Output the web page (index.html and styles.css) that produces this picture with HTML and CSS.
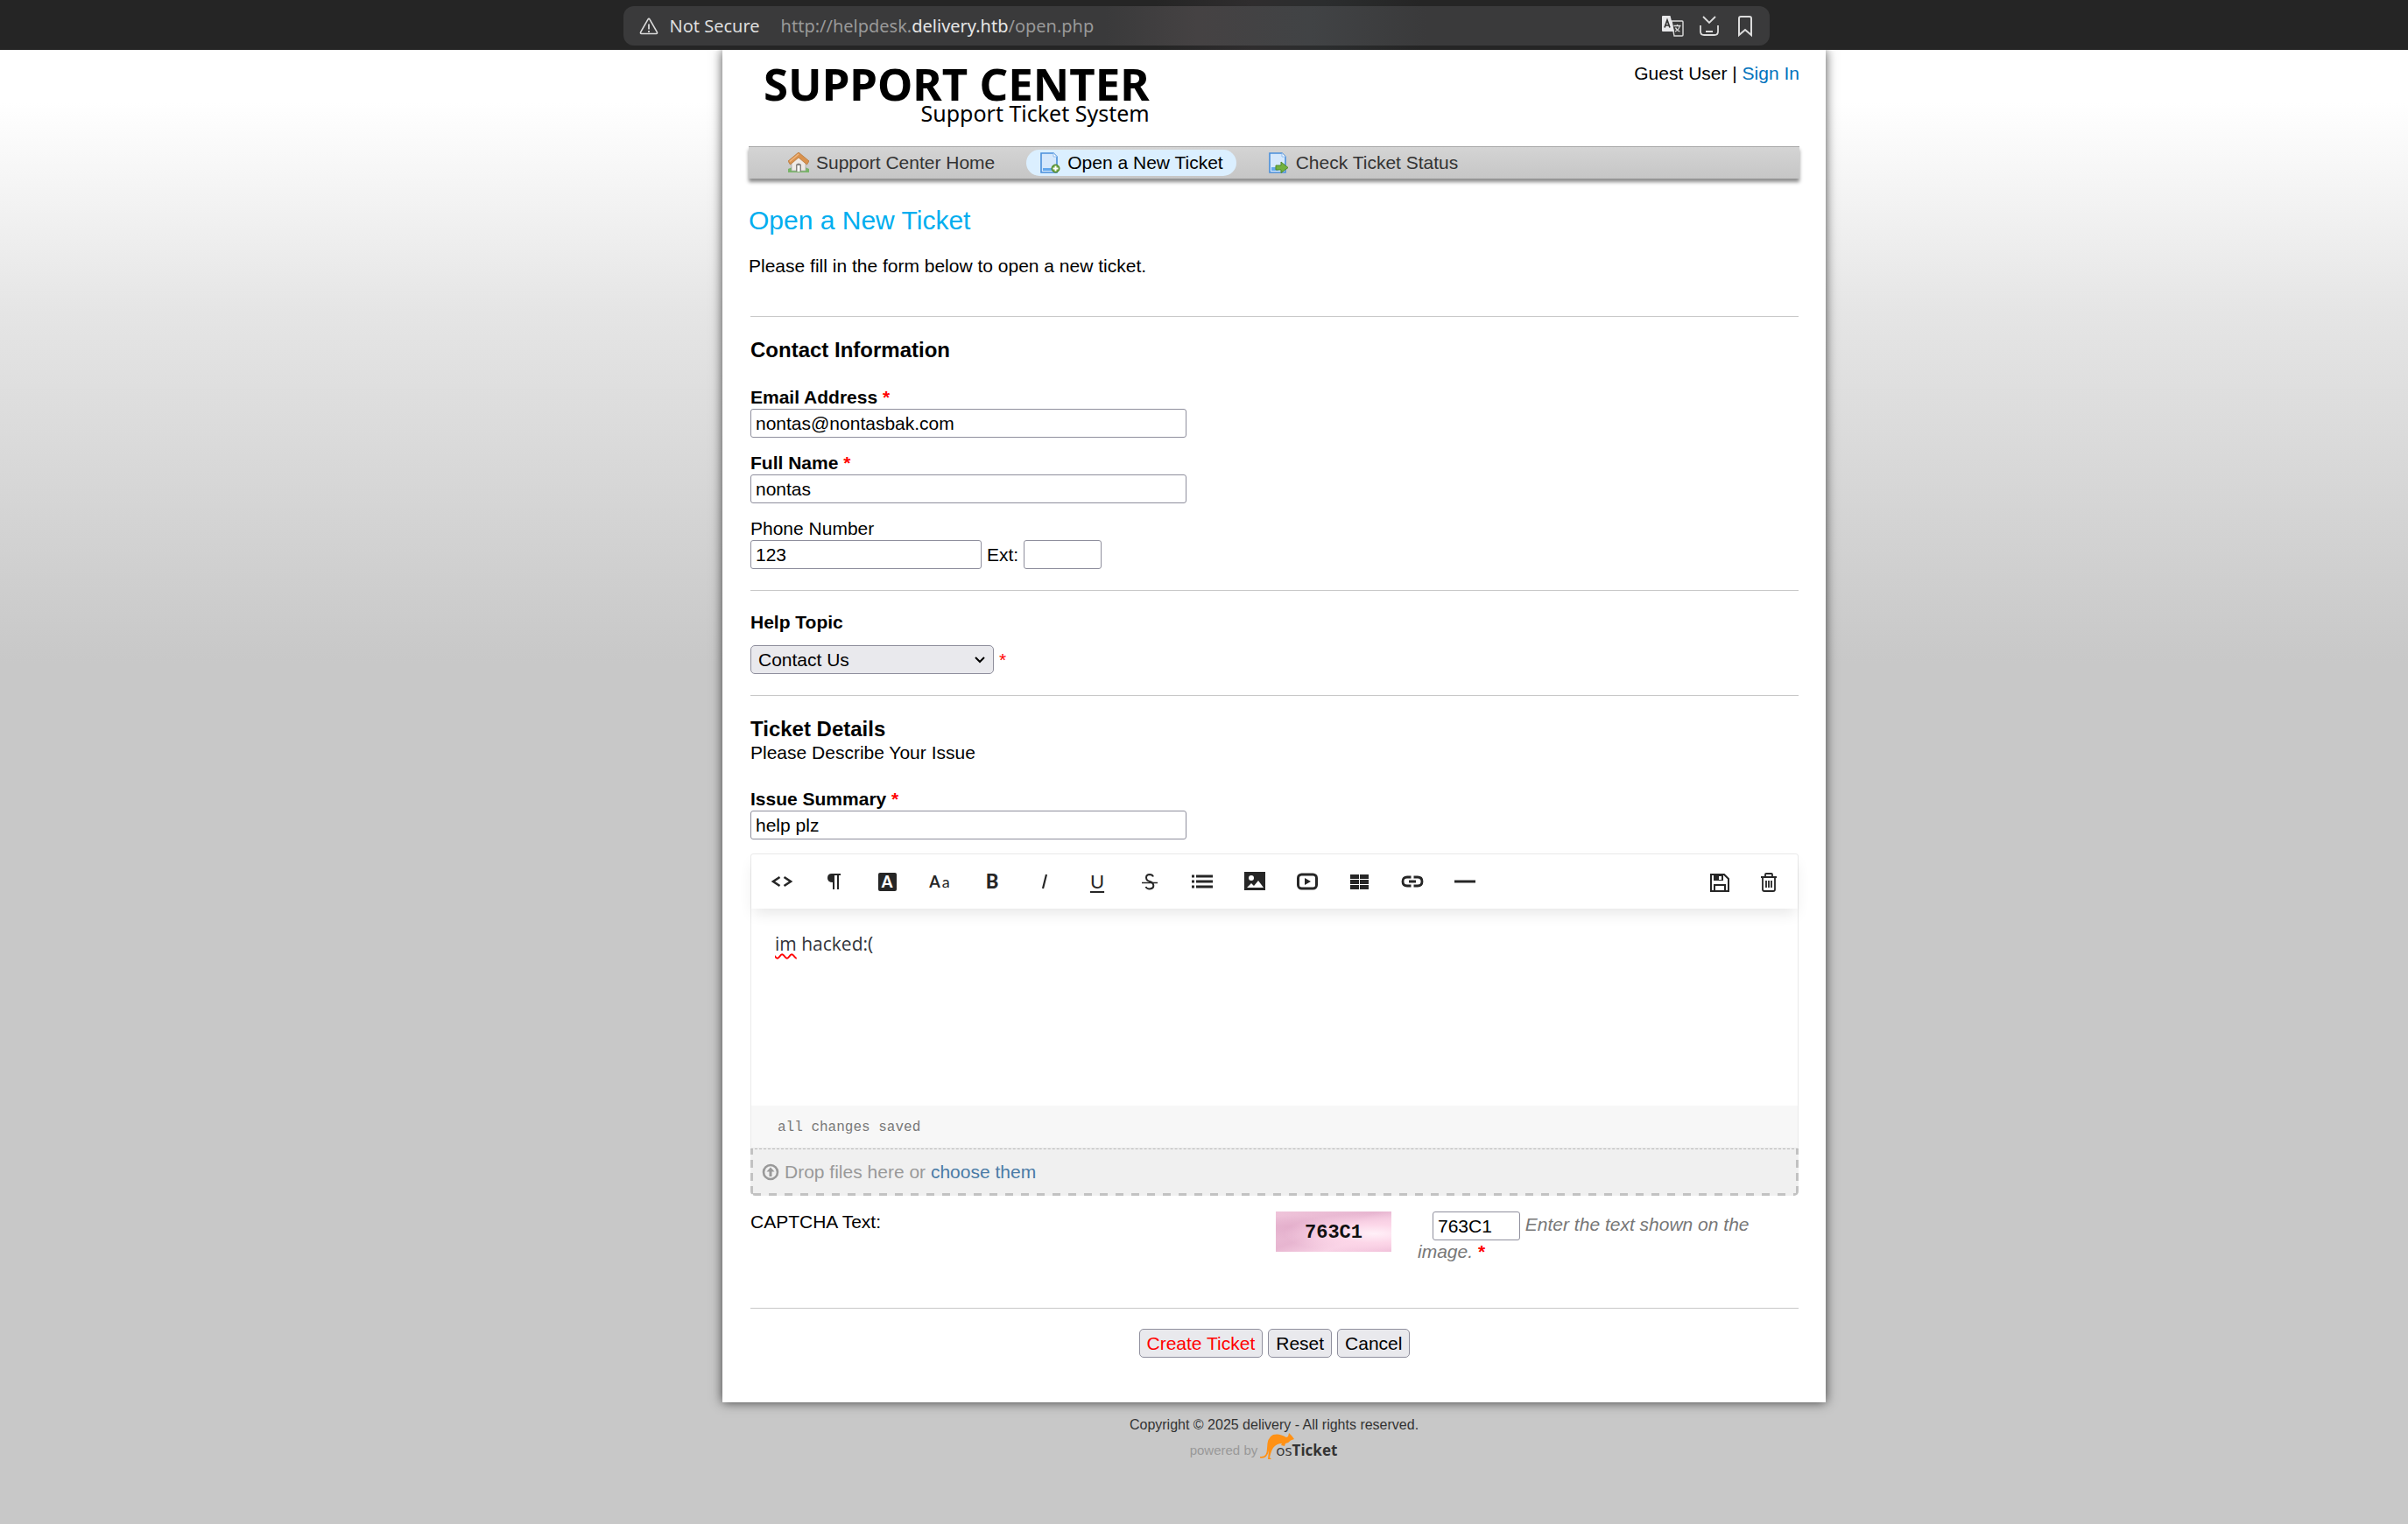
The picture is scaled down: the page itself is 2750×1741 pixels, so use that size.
FILE: index.html
```html
<!DOCTYPE html>
<html lang="en">
<head>
<meta charset="utf-8">
<title>Support Center - Open a New Ticket</title>
<link rel="stylesheet" href="styles.css">
</head>
<body>
<div class="browser-bar">
  <div class="address">
    <svg class="icon-warn" viewBox="0 0 24 24" width="24" height="24" aria-hidden="true"><path d="M11 4.200q1-1.700 2 0l8.300 14.300q.9 1.900-1 2H3.700q-1.900-.1-1-2z" fill="none" stroke="#dcdcdc" stroke-width="1.600"/><path d="M12 9.500v6M12 17v2" stroke="#dcdcdc" stroke-width="1.800"/></svg>
    <span class="secure">Not Secure</span>
    <span class="url">http://helpdesk.<b>delivery.htb</b>/open.php</span>
    <span class="address-icons">
      <svg viewBox="0 0 26 26" width="26" height="26" aria-hidden="true"><path d="M12 7h12q1 0 1 1v15q0 1-1 1H15z" fill="#3b3b3b" stroke="#dcdcdc" stroke-width="1.400"/><path d="M14.500 12.500h8M18.500 11v1.500M16 19q4.500-2 5-6M16.500 14.500q1 3 5 4.500" fill="none" stroke="#dcdcdc" stroke-width="1.300"/><path d="M2 1h8.500l4.500 18H2q-1 0-1-1V2q0-1 1-1z" fill="#e8e8ea"/><path d="M4 14.500L7 6l3 8.500M5 12h4" fill="none" stroke="#333" stroke-width="1.700"/></svg>
      <svg viewBox="0 0 26 26" width="26" height="26" aria-hidden="true"><path d="M6 2l7 7 7-7M3 12v7q0 4 4 4h12q4 0 4-4v-7M9 19h8" fill="none" stroke="#dcdcdc" stroke-width="1.800"/></svg>
      <svg viewBox="0 0 26 26" width="26" height="26" aria-hidden="true"><path d="M5 4q0-2 2-2h10q2 0 2 2v19l-7-6-7 6z" fill="none" stroke="#dcdcdc" stroke-width="2"/></svg>
    </span>
  </div>
</div>

<div class="viewport">
<div class="container">
  <header class="header">
    <a class="logo" href="#"><span class="logo-title">SUPPORT CENTER</span><span class="logo-sub">Support Ticket System</span></a>
    <p class="user">Guest User | <a href="#">Sign In</a></p>
  </header>

  <nav class="nav">
    <a href="#"><svg viewBox="0 0 24 24" width="24" height="24" aria-hidden="true"><path d="M0 19q5-3 12-2 7-1 12 2v4H0z" fill="#78b468"/><path d="M4 11l8-8 8 8v10H4z" fill="#efeae6" stroke="#aaa" stroke-width=".8"/><path d="M9 22v-8q3-3 6 0v8z" fill="#87837f"/><path d="M10.500 22v-7h3v7z" fill="#fff"/><path d="M12 0L0 10l2.500 4L12 6l9.500 8 2.500-4z" fill="#d9924e" stroke="#b97a3e" stroke-width=".8"/><path d="M12 2L2 10.500" stroke="#f0b780" stroke-width="1.500"/></svg>Support Center Home</a>
    <a href="#" class="active"><svg viewBox="0 0 24 24" width="24" height="24" aria-hidden="true"><path d="M2 1h14l4 4v18H2z" fill="#d5e8fc" stroke="#4a8fda" stroke-width="1.600"/><path d="M16 1v4h4" fill="#fff" stroke="#8abaf0"/><path d="M4 18h12v3H4z" fill="#64a8ec"/><circle cx="18.500" cy="18.500" r="4.500" fill="#6aa33e" stroke="#4b7f25"/><path d="M18.500 15.500v6M15.500 18.500h6" stroke="#fff" stroke-width="2"/></svg>Open a New Ticket</a>
    <a href="#"><svg viewBox="0 0 24 24" width="24" height="24" aria-hidden="true"><path d="M2 1h14l4 4v18H2z" fill="#d5e8fc" stroke="#4a8fda" stroke-width="1.600"/><path d="M16 1v4h4" fill="#fff" stroke="#8abaf0"/><path d="M4 17h8v4H4z" fill="#64a8ec"/><path d="M9 15h6v-4l8 6.500-8 6V20H9z" fill="#72b13f" stroke="#4f8a2a"/></svg>Check Ticket Status</a>
  </nav>

  <main>
    <h1>Open a New Ticket</h1>
    <p class="intro">Please fill in the form below to open a new ticket.</p>

    <form class="ticket" onsubmit="return false">
      <hr>
      <section>
        <h3>Contact Information</h3>
        <div class="field lead">
          <label for="email"><b>Email Address <span class="req">*</span></b></label>
          <input id="email" type="text" value="nontas@nontasbak.com">
        </div>
        <div class="field">
          <label for="name"><b>Full Name <span class="req">*</span></b></label>
          <input id="name" type="text" value="nontas">
        </div>
        <div class="field">
          <label for="phone">Phone Number</label>
          <div class="phone-row">
            <input id="phone" class="phone" type="text" value="123">
            <label for="ext">Ext:</label>
            <input id="ext" class="ext" type="text">
          </div>
        </div>
      </section>
      <hr>
      <section>
        <label class="topic-label" for="topic"><b>Help Topic</b></label>
        <div class="topic-row">
          <span class="select">
            <select id="topic"><option>Contact Us</option></select>
            <svg viewBox="0 0 12 8" width="12" height="8" aria-hidden="true"><path d="M1 1l5 5 5-5" fill="none" stroke="#000" stroke-width="2"/></svg>
          </span>
          <span class="req">*</span>
        </div>
      </section>
      <hr>
      <section>
        <h3>Ticket Details</h3>
        <p class="describe">Please Describe Your Issue</p>
        <div class="field lead">
          <label for="summary"><b>Issue Summary <span class="req">*</span></b></label>
          <input id="summary" type="text" value="help plz">
        </div>

        <div class="editor">
          <div class="toolbar">
            <button type="button" aria-label="HTML"><svg viewBox="0 0 26 26" width="26" height="26"><path d="M10.500 8L3 13l7.500 5M15.500 8l7.500 5-7.500 5" fill="none" stroke="#262626" stroke-width="2.600"/></svg></button>
            <button type="button" aria-label="Format"><svg viewBox="0 0 26 26" width="26" height="26"><path d="M5 9q0-5 5-5h10v2h-2v16h-2V6h-3v16h-2v-8q-6 0-6-5z" fill="#262626"/></svg></button>
            <button type="button" aria-label="Color"><span class="swatch">A</span></button>
            <button type="button" aria-label="Font" class="t-font"><b>A</b><span>a</span></button>
            <button type="button" aria-label="Bold" class="t-bold">B</button>
            <button type="button" aria-label="Italic"><svg viewBox="0 0 26 26" width="26" height="26"><path d="M15 5l-4 16" stroke="#262626" stroke-width="2.200"/></svg></button>
            <button type="button" aria-label="Underline" class="t-under">U</button>
            <button type="button" aria-label="Strikethrough"><svg viewBox="0 0 26 26" width="26" height="26"><path d="M17 7.500Q16 5 13 5 9 5.200 9 8.500T13 13t4.300 4.500T13 21.500Q9.500 21.500 8.500 19" fill="none" stroke="#262626" stroke-width="2"/><path d="M4 14.500h18" stroke="#262626" stroke-width="1.500"/></svg></button>
            <button type="button" aria-label="List"><svg viewBox="0 0 26 26" width="26" height="26"><path d="M6 7h19M6 13h19M6 19h19M1 7h3M1 13h3M1 19h3" stroke="#262626" stroke-width="3"/></svg></button>
            <button type="button" aria-label="Image"><svg viewBox="0 0 26 26" width="26" height="26"><path d="M1 2h24v21H1z" fill="#262626"/><circle cx="9" cy="9" r="3" fill="#fff"/><path d="M4 20l5-5 3 3 5-6 6 8z" fill="#fff"/></svg></button>
            <button type="button" aria-label="Video"><svg viewBox="0 0 26 26" width="26" height="26"><rect x="2.500" y="5" width="21" height="16" rx="4" fill="none" stroke="#262626" stroke-width="3"/><path d="M10 9l7 4-7 4z" fill="#262626"/></svg></button>
            <button type="button" aria-label="Table"><svg viewBox="0 0 26 26" width="26" height="26"><path d="M2 5h10v5H2zm11 0h10v5H13zM2 11h10v5H2zm11 0h10v5H13zM2 17h10v5H2zm11 0h10v5H13z" fill="#262626"/></svg></button>
            <button type="button" aria-label="Link"><svg viewBox="0 0 26 26" width="26" height="26"><path d="M11.500 8H7q-5 0-5 5t5 5h4.500M14.500 8H19q5 0 5 5t-5 5h-4.500M9 13h8" fill="none" stroke="#262626" stroke-width="2.800"/></svg></button>
            <button type="button" aria-label="Line"><svg viewBox="0 0 26 26" width="26" height="26"><path d="M1 13h24" stroke="#262626" stroke-width="3"/></svg></button>
            <span class="spacer"></span>
            <button type="button" class="tool-end" aria-label="Save draft"><svg viewBox="0 0 26 26" width="26" height="26"><path d="M3 5h15l5 5v14H3z" fill="none" stroke="#262626" stroke-width="2"/><path d="M6 5h11v7H6z" fill="#262626"/><path d="M12 7h3v4h-3z" fill="#fff"/><path d="M7 24v-7h12v7" fill="none" stroke="#262626" stroke-width="2"/></svg></button>
            <button type="button" class="tool-end" aria-label="Delete draft"><svg viewBox="0 0 26 26" width="26" height="26"><path d="M4 8h18M9 8V5q0-1 1-1h6q1 0 1 1v3M6 8v14q0 2 2 2h10q2 0 2-2V8M10 12v8M13 12v8M16 12v8" fill="none" stroke="#262626" stroke-width="1.800"/></svg></button>
          </div>
          <div class="editor-body" contenteditable="true" role="textbox" aria-label="Issue details" spellcheck="false"><span class="typo">im</span> hacked:(</div>
          <div class="status">all changes saved</div>
        </div>
        <div class="dropzone">
          <svg viewBox="0 0 20 20" width="20" height="20" aria-hidden="true"><circle cx="10" cy="10" r="8" fill="none" stroke="#999" stroke-width="2.600"/><path d="M10 4.500l4.500 5h-3V15h-3V9.500h-3z" fill="#999"/></svg>
          <span>Drop files here or <a href="#">choose them</a></span>
        </div>
      </section>

      <div class="captcha">
        <label for="captcha">CAPTCHA Text:</label>
        <span class="captcha-image">763C1</span>
        <div class="captcha-entry"><input id="captcha" type="text" value="763C1"> <em>Enter the text shown on the image.</em> <b class="req">*</b></div>
      </div>
      <hr>
      <div class="actions">
        <button type="submit" class="create">Create Ticket</button>
        <button type="reset">Reset</button>
        <button type="button">Cancel</button>
      </div>
    </form>
  </main>
</div>

<footer class="footer">
  <p>Copyright © 2025 delivery - All rights reserved.</p>
  <a class="powered" href="#"><span>powered by</span>
    <svg class="kangaroo" viewBox="0 0 40 30" width="40" height="30" aria-hidden="true"><path d="M0 27Q8 28 8 18 8 5 15 2q7-2 15 3l2-1 1-4 3 3 3 4-4 1.500Q32 12 29 12l-1 3-4-1 1-2q-6 0-10 5-2 3-3 7l-1 4 2 2H9l1-10Q8 30 0 28.500z" fill="#ff9115"/></svg>
    <span class="brand">os<b>Ticket</b></span></a>
</footer>
</div>
</body>
</html>
```
FILE: styles.css
```css
* { box-sizing: border-box; }

body {
  margin: 0;
  background: #c8c8c8;
  color: #000;
  font: 21px/24px "Liberation Sans", Arial, sans-serif;
}

p, h1, h3 { margin: 0; }

a { color: #0072bc; text-decoration: none; }

input, select, button { font: inherit; color: inherit; }

/* Browser address bar */
.browser-bar {
  display: flex;
  justify-content: center;
  height: 57px;
  padding: 7px 18px 5px 0;
  background: linear-gradient(90deg, #252525 48%, #2f2d2e 52%, #2b2d2e 55%, #252525 59%);
}

.address {
  display: flex;
  align-items: center;
  width: 100%;
  max-width: 1309px;
  padding: 0 14px 0 17px;
  border-radius: 12px;
  background: linear-gradient(90deg, #3a3a3b 42%, #454243 50%, #414345 60%, #3a3a3b 70%);
  color: #dedede;
  font-family: "Noto Sans", "Open Sans", sans-serif;
  font-size: 20px;
}

.secure { margin-left: 12px; }
.url { margin-left: 24px; color: #999; }
.url b { color: #e6e6e6; font-weight: 400; }
.address-icons { display: flex; gap: 16px; margin-left: auto; }

/* Page */
.viewport {
  padding-left: 160px;
  background: linear-gradient(#fff 60px, #e5e5e5 300px, #c8c8c8 700px);
}

.container {
  max-width: 1260px;
  margin: 0 auto;
  padding: 0 30px 51px;
  background: #fff;
  box-shadow: 0 0 12px rgba(0, 0, 0, .7);
  clip-path: inset(0 -20px -20px -20px);
}

.header {
  display: flex;
  justify-content: space-between;
  height: 110px;
  padding: 15px 0 0 17px;
}

.logo {
  display: flex;
  flex-direction: column;
  align-items: flex-end;
  color: #000;
  font-family: "Noto Sans", "Open Sans", sans-serif;
}

.logo-title { font-size: 51px; line-height: 46px; font-weight: 700; }
.logo-sub { font-size: 25px; line-height: 22px; }

.nav {
  display: flex;
  align-items: center;
  gap: 21px;
  height: 37px;
  padding: 0 30px;
  border-top: 1px solid #aaa;
  background: linear-gradient(#d4d4d4, #c6c6c6);
  box-shadow: 0 4px 4px rgba(0, 0, 0, .45);
}

.nav a {
  display: flex;
  align-items: center;
  gap: 8px;
  height: 30px;
  padding: 0 15px;
  border-radius: 15px;
  color: #333;
}

.nav .active { background: #dbefff; color: #000; }

h1 {
  margin-top: 30px;
  color: #00aeef;
  font-size: 30px;
  line-height: 36px;
  font-weight: 400;
}

.intro { margin: 22px 0 45px; }

.ticket { margin: 0 1px 0 2px; }

hr {
  height: 1px;
  margin: 24px 0;
  border: 0;
  background: #c8c8c8;
}

.ticket > hr:first-child { margin-top: 0; }

h3 { font-size: 24px; line-height: 28px; }

.field { margin-top: 16px; line-height: 26px; }
.field.lead { margin-top: 27px; }
.field > label { display: block; }
.describe { line-height: 26px; }
.req { color: #f00; }

input {
  display: block;
  width: 498px;
  max-width: 100%;
  height: 33px;
  padding: 0 5px;
  border: 1px solid #8f8f9d;
  border-radius: 3px;
  background: #fff;
}

.phone-row { display: flex; align-items: center; gap: 6px; height: 33px; }
.phone { width: 264px; }
.ext { width: 89px; }

.topic-label { display: block; }
.topic-row { display: flex; align-items: center; gap: 6px; margin-top: 14px; }

.select { display: grid; align-items: center; width: 278px; }
.select > * { grid-area: 1 / 1; }
.select svg { justify-self: end; margin-right: 10px; pointer-events: none; }

select {
  appearance: none;
  width: 100%;
  height: 33px;
  padding: 0 8px;
  border: 1px solid #8f8f9d;
  border-radius: 5px;
  background: #e9e9ed;
}

/* Rich text editor */
.editor { margin-top: 16px; border: 1px solid #eaeaea; border-radius: 3px 3px 0 0; }

.toolbar {
  display: flex;
  align-items: center;
  height: 62px;
  padding: 0 5px;
  box-shadow: 0 8px 16px -3px rgba(0, 0, 0, .1);
}

.toolbar button {
  display: flex;
  align-items: center;
  justify-content: center;
  width: 60px;
  height: 40px;
  padding: 0;
  border: 0;
  background: none;
  color: #262626;
  font-family: Lato, sans-serif;
  font-size: 22px;
}

.toolbar .tool-end { width: 56px; }
.spacer { flex: 1; }
.toolbar .t-font { gap: 2px; font-size: 18px; }
.toolbar .t-bold { font-weight: 900; }
.toolbar .t-under { text-decoration: underline 2px; text-underline-offset: 3px; }

.swatch {
  width: 21px;
  height: 21px;
  border-radius: 2px;
  background: #262626;
  color: #fff;
  font-size: 18px;
  line-height: 21px;
  font-weight: 900;
}

.editor-body {
  min-height: 225px;
  padding: 28px 27px;
  outline: 0;
  color: #313439;
  font-family: "Open Sans", sans-serif;
}

.typo { text-decoration: underline wavy #f00 2px; text-underline-offset: 3px; }

.status {
  height: 48px;
  padding: 1px 30px 0;
  background: #f7f7f7;
  color: #777;
  font: 16px/48px "Liberation Mono", monospace;
}

/* Drop target with widely spaced dashes on three sides */
.dropzone {
  display: flex;
  align-items: center;
  gap: 6px;
  height: 54px;
  padding: 0 13px 2px;
  border-top: 1px dashed #bbb;
  border-radius: 0 0 5px 5px;
  background:
    repeating-linear-gradient(90deg, transparent 0 3px, #c2c2c2 3px 12px, transparent 12px 18px) bottom / 100% 3px no-repeat,
    repeating-linear-gradient(#c2c2c2 0 6px, transparent 6px 12px, #c2c2c2 12px 15px) left / 3px 100% no-repeat,
    repeating-linear-gradient(#c2c2c2 0 6px, transparent 6px 12px, #c2c2c2 12px 15px) right / 3px 100% no-repeat,
    #f0f0f0;
  color: #999;
}

.dropzone a { color: #4a7ba6; }

.captcha { display: flex; align-items: flex-start; margin: 18px 0 51px; }
.captcha > label { flex: 0 1 600px; }

.captcha-image {
  flex: none;
  width: 132px;
  height: 46px;
  background:
    radial-gradient(ellipse at 85% 55%, #fff0f8 0, #fcd6e8 30%, transparent 65%),
    radial-gradient(ellipse at 15% 40%, #e3aecb 0, transparent 35%),
    linear-gradient(160deg, #efc4da, #e7b5d0 45%, #f8d2e5 70%, #eebbd6);
  color: #111;
  font: 700 22px/50px "Liberation Mono", monospace;
  text-align: center;
}

.captcha-entry { flex: 1; margin-left: 30px; line-height: 26px; }
.captcha-entry input { display: inline-block; width: 100px; margin-left: 17px; vertical-align: middle; }
.captcha-entry em { color: #777; }

.actions { display: flex; justify-content: center; gap: 6px; margin-top: -1px; }

.actions button {
  height: 33px;
  padding: 0 8px;
  border: 1px solid #8f8f9d;
  border-radius: 5px;
  background: #e9e9ed;
}

.actions .create { color: #f00; }

.footer {
  display: flex;
  flex-direction: column;
  align-items: center;
  padding: 14px 0 72px;
  color: #333;
  font-size: 16px;
}

.powered {
  display: flex;
  align-items: flex-end;
  height: 30px;
  margin: -3px 24px 0 0;
  color: #999;
  font-size: 15px;
  line-height: 20px;
}

.kangaroo { margin: 0 -22px 0 3px; }
.brand { color: #333; font-family: "Open Sans", sans-serif; font-size: 17px; }
.brand b { font-weight: 700; }
```
